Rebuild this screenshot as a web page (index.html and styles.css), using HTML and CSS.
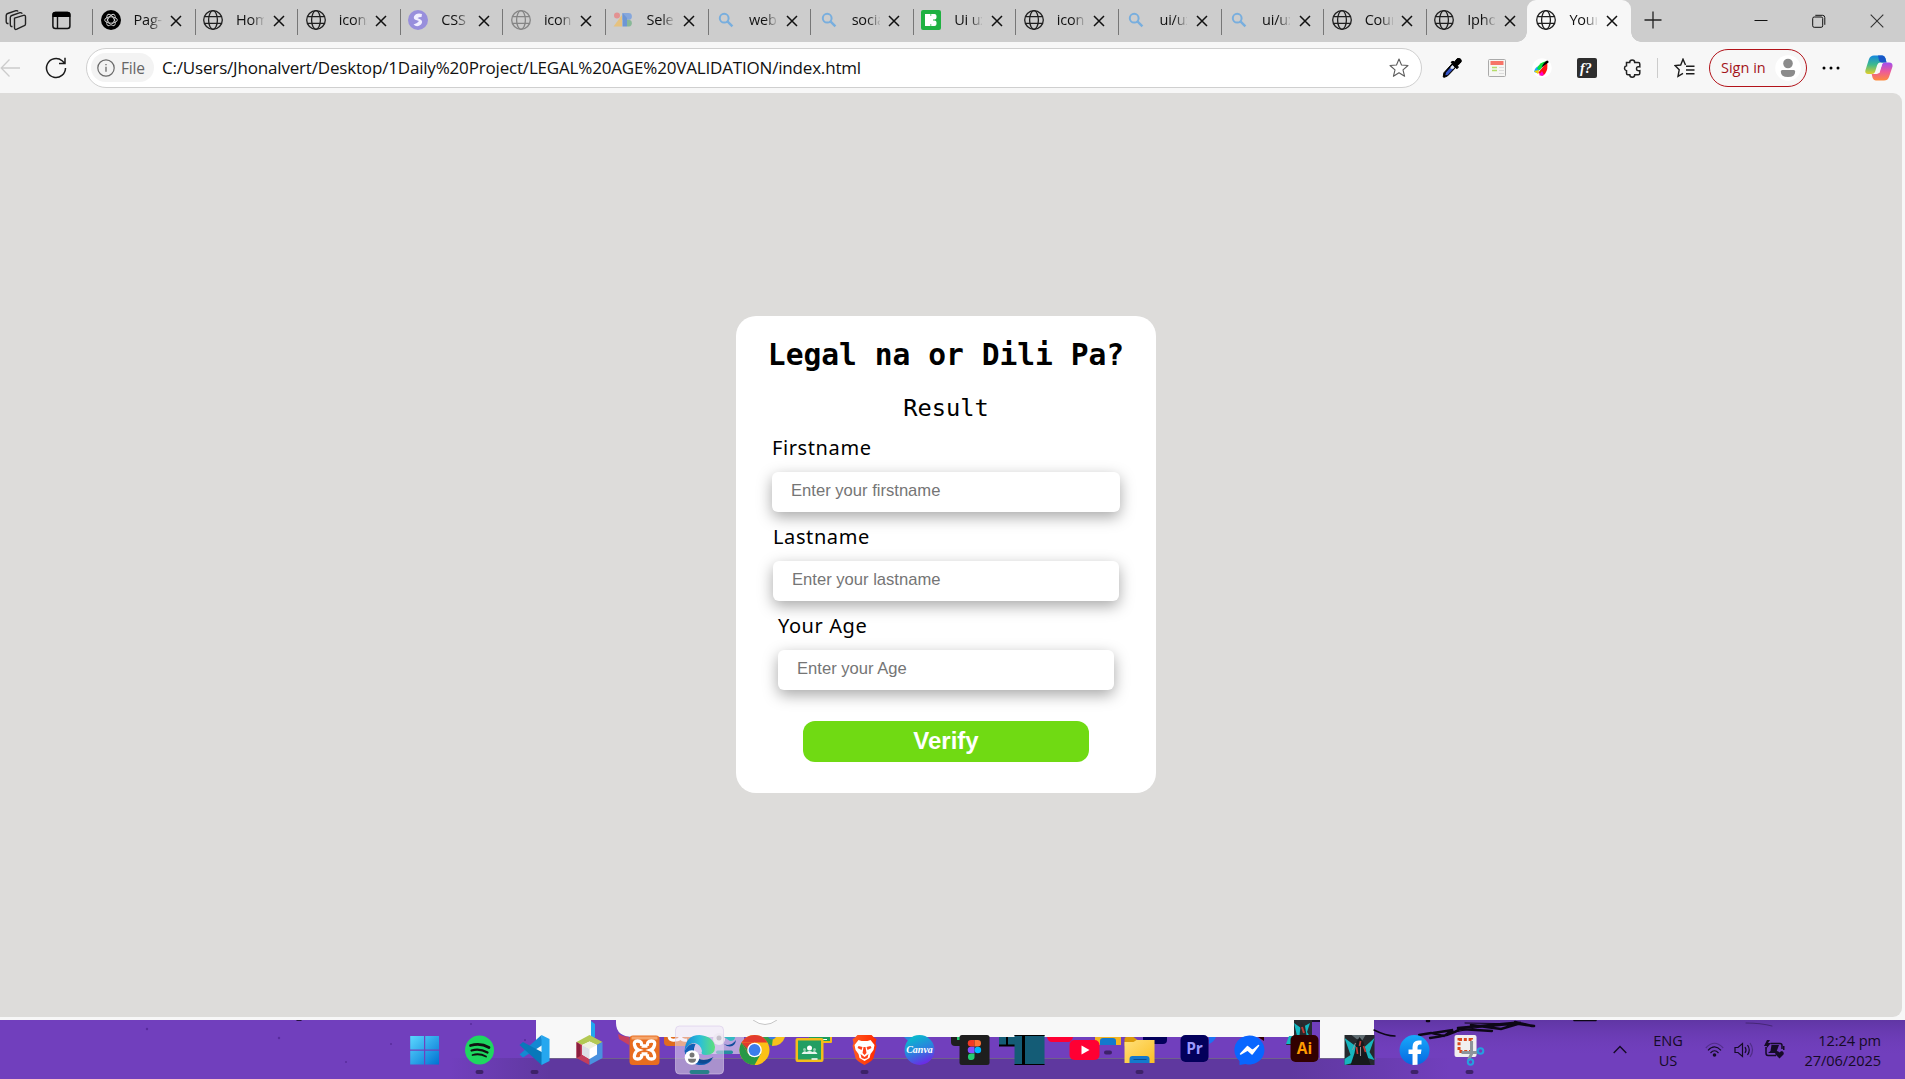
FILE: index.html
```html
<!DOCTYPE html>
<html lang="en">
<head>
<meta charset="utf-8">
<title>Your Age</title>
<link rel="stylesheet" href="styles.css">
</head>
<body>
<svg class="defs" width="0" height="0">
  <defs>
    <linearGradient id="g-win" x1="0" y1="0" x2="1" y2="1"><stop offset="0" stop-color="#5bd8ff"/><stop offset="1" stop-color="#0072d2"/></linearGradient>
    <linearGradient id="g-edge" x1="0" y1="0" x2="1" y2="0"><stop offset="0" stop-color="#1785d8"/><stop offset=".5" stop-color="#2bbfd8"/><stop offset="1" stop-color="#5fe07a"/></linearGradient>
    <linearGradient id="g-canva" x1=".3" y1="0" x2=".7" y2="1"><stop offset="0" stop-color="#06bfcb"/><stop offset=".5" stop-color="#2a82de"/><stop offset="1" stop-color="#7420e6"/></linearGradient>
    <linearGradient id="g-fold" x1="0" y1="0" x2="1" y2="1"><stop offset="0" stop-color="#ffe07a"/><stop offset="1" stop-color="#fbbf24"/></linearGradient>
    <linearGradient id="g-brave" x1="0" y1="0" x2="1" y2="0"><stop offset="0" stop-color="#ff5a1f"/><stop offset="1" stop-color="#ff2a00"/></linearGradient>
    <linearGradient id="g-fb" x1="0" y1="0" x2="0" y2="1"><stop offset="0" stop-color="#17a9fb"/><stop offset="1" stop-color="#0767e0"/></linearGradient>
    <linearGradient id="g-cop1" x1="0" y1="0" x2="0" y2="1"><stop offset="0" stop-color="#1488e0"/><stop offset=".5" stop-color="#3fbb8c"/><stop offset="1" stop-color="#e3cf2a"/></linearGradient>
    <linearGradient id="g-cop2" x1="0" y1="0" x2="0" y2="1"><stop offset="0" stop-color="#a04ff0"/><stop offset=".5" stop-color="#ec5a9a"/><stop offset="1" stop-color="#ff8a3c"/></linearGradient>
    <linearGradient id="g-band" x1="0" y1="0" x2="1" y2="0"><stop offset="0" stop-color="#5f389f" stop-opacity="0"/><stop offset=".1" stop-color="#5f389f"/><stop offset=".84" stop-color="#5f389f"/><stop offset="1" stop-color="#5f389f" stop-opacity="0"/></linearGradient>
    <linearGradient id="g-right" x1="0" y1="0" x2="0" y2="1"><stop offset="0" stop-color="#4b2b86" stop-opacity=".45"/><stop offset="1" stop-color="#6b3cb4" stop-opacity="0"/></linearGradient>
    <symbol id="globe" viewBox="0 0 20 20"><g fill="none" stroke="currentColor" stroke-width="1.3"><circle cx="10" cy="10" r="9.3"/><ellipse cx="10" cy="10" rx="4.4" ry="9.3"/><path d="M1.5 6.6h17M1.5 13.4h17"/></g></symbol>
    <symbol id="close" viewBox="0 0 12 12"><path d="M1 1l10 10M11 1L1 11" fill="none" stroke="#111" stroke-width="1.5"/></symbol>
    <symbol id="search" viewBox="0 0 20 20"><g fill="none" stroke="#78aede" stroke-width="2"><circle cx="8.2" cy="8.2" r="4.4"/><path d="M11.4 11.4l5 5" stroke-width="2.4"/></g></symbol>
  </defs>
</svg>

<header class="tabstrip">
  <div class="strip-tools">
    <svg width="22" height="22" viewBox="0 0 22 22"><g fill="none" stroke="#222" stroke-width="1.4" stroke-linejoin="round"><path d="M9.5 9.2l9-2.8q2-.5 2 1.500v7q0 1.200-1.200 1.800l-7.500 3.500q-2.300.9-2.300-1.500z"/><path d="M7.500 17.500q-2.200.3-2.200-2V8.500q0-1.500 1.500-2L15 3.700q1.800-.4 2.200 1"/><path d="M3.500 14.500q-2.300.3-2.300-2V6.500q0-1.500 1.500-2L11 1.700q1.500-.4 2 .8"/></g></svg>
    <svg width="19" height="19" viewBox="0 0 19 19"><rect x=".9" y="1.500" width="17" height="16" rx="2.500" fill="none" stroke="#111" stroke-width="1.500"/><path d="M.5 6V3.500Q.5.800 3.500.800h12q2.900 0 2.900 2.700V6z"/><path d="M5.500 6v11.500" stroke="#111" stroke-width="1.400"/></svg>
  </div>
  <nav class="tabs">
    <div class="tab"><svg class="fav" viewBox="0 0 20 20"><circle cx="10" cy="10" r="10"/><g fill="none" stroke="#ddd" stroke-width=".9"><ellipse cx="10" cy="10" rx="6.300" ry="3.200"/><ellipse cx="10" cy="10" rx="6.300" ry="3.200" transform="rotate(60 10 10)"/><ellipse cx="10" cy="10" rx="6.300" ry="3.200" transform="rotate(120 10 10)"/></g></svg><span>Pag-ibig</span><svg class="x"><use href="#close"/></svg></div>
    <div class="tab"><svg class="fav"><use href="#globe"/></svg><span>Home</span><svg class="x"><use href="#close"/></svg></div>
    <div class="tab"><svg class="fav"><use href="#globe"/></svg><span>icons</span><svg class="x"><use href="#close"/></svg></div>
    <div class="tab"><svg class="fav" viewBox="0 0 20 20"><circle cx="10" cy="10" r="10" fill="#988fdc"/><path d="M14 4q-6-1.500-8 2.500-.8 2.500 2 3.500l3 1q-2 3-5.500 3.500Q9 18 13 14.500q2.500-3-.5-5L9.500 8q1.500-1 4-1z" fill="#f1efff"/></svg><span>CSS G</span><svg class="x"><use href="#close"/></svg></div>
    <div class="tab"><svg class="fav faded"><use href="#globe"/></svg><span>icons</span><svg class="x"><use href="#close"/></svg></div>
    <div class="tab"><svg class="fav" viewBox="0 0 20 20"><circle cx="4" cy="5.500" r="3" fill="#e39292"/><path d="M.5 16.500L9 5v11.500z" fill="#e6c27f"/><path d="M9.500 3h6a3.400 3.400 0 010 6.800h-6z" fill="#86a7dc"/><path d="M14 9.800h2a3.400 3.400 0 010 6.700h-2z" fill="#88b897"/><path d="M9.500 3L14 8v8.500H9.500z" fill="#6d96d4"/></svg><span>Select</span><svg class="x"><use href="#close"/></svg></div>
    <div class="tab"><svg class="fav"><use href="#search"/></svg><span>web d</span><svg class="x"><use href="#close"/></svg></div>
    <div class="tab"><svg class="fav"><use href="#search"/></svg><span>social</span><svg class="x"><use href="#close"/></svg></div>
    <div class="tab"><svg class="fav" viewBox="0 0 20 20"><rect width="20" height="20" rx="2" fill="#1fb141"/><path d="M4 4h5.500v12H4zM10.200 4h3.300q2 0 2 2v1.500q0 2-2 2h-3.300zM10.200 10.400h3.300q2 0 2 2V14q0 2-2 2h-3.300zM9 6h3v8H9z" fill="#fff"/></svg><span>Ui ux</span><svg class="x"><use href="#close"/></svg></div>
    <div class="tab"><svg class="fav"><use href="#globe"/></svg><span>icons</span><svg class="x"><use href="#close"/></svg></div>
    <div class="tab"><svg class="fav"><use href="#search"/></svg><span>ui/ux</span><svg class="x"><use href="#close"/></svg></div>
    <div class="tab"><svg class="fav"><use href="#search"/></svg><span>ui/ux</span><svg class="x"><use href="#close"/></svg></div>
    <div class="tab"><svg class="fav"><use href="#globe"/></svg><span>Coun</span><svg class="x"><use href="#close"/></svg></div>
    <div class="tab"><svg class="fav"><use href="#globe"/></svg><span>Iphone</span><svg class="x"><use href="#close"/></svg></div>
    <div class="tab active"><svg class="fav"><use href="#globe"/></svg><span>Your A</span><svg class="x"><use href="#close"/></svg></div>
  </nav>
  <svg class="newtab" width="18" height="18" viewBox="0 0 18 18"><path d="M9 .5v17M.5 9h17" stroke="#222" stroke-width="1.300"/></svg>
  <div class="window-buttons">
    <svg width="14" height="14" viewBox="0 0 14 14"><path d="M.5 6.500h13" stroke="#111"/></svg>
    <svg width="14" height="14" viewBox="0 0 14 14"><g fill="none" stroke="#111"><rect x=".7" y="3" width="10" height="10.300" rx="1.500"/><path d="M3.300 1.300h7.200q2.300 0 2.300 2.300v7.200"/></g></svg>
    <svg width="14" height="14" viewBox="0 0 14 14"><path d="M.7.7l12.600 12.600M13.300.7L.7 13.300" stroke="#333" stroke-width="1.100"/></svg>
  </div>
</header>

<section class="toolbar">
  <svg class="back" width="21" height="20" viewBox="0 0 21 20"><path d="M20 10H1.500M9.500 1.500L1.200 10l8.300 8.500" fill="none" stroke="#ccc" stroke-width="1.300"/></svg>
  <svg class="reload" width="22" height="22" viewBox="0 0 22 22"><path d="M20.500 11a9.500 9.500 0 11-3.400-7.300L19.500 6M20 .8v5.700h-6" fill="none" stroke="#1c1c1c" stroke-width="1.500"/></svg>
  <div class="address">
    <div class="chip"><svg width="18" height="18" viewBox="0 0 18 18"><circle cx="9" cy="9" r="8.200" fill="none" stroke="#6a6a6a" stroke-width="1.200"/><path d="M9 7.800v5M9 4.900v1.400" stroke="#6a6a6a" stroke-width="1.300"/></svg><span>File</span></div>
    <span class="url">C:/Users/Jhonalvert/Desktop/1Daily%20Project/LEGAL%20AGE%20VALIDATION/index.html</span>
    <svg class="star" width="20" height="20" viewBox="0 0 20 20"><path d="M10 1l2.500 6 6.500.5-5 4.300 1.600 6.500L10 14.800l-5.600 3.500L6 11.800 1 7.500 7.500 7z" fill="none" stroke="#5c5c5c" stroke-width="1.100" stroke-linejoin="round"/></svg>
  </div>
  <div class="extensions">
    <svg width="20" height="20" viewBox="0 0 20 20"><path d="M1.200 19l.7-4.200 8.300-9.200 3.700 3.600-8.200 8.600-3.300 1.500z" stroke="#000"/><path d="M4.200 14.300l3.500-4 3.500.6-5.700 6-2.300.4z" fill="#3454c8"/><path d="M8.500 9l2-2 2.200 2.200-1.500 1.700-2.700-.2z" fill="#dfe8fb"/><path d="M9 4.200l2-1 1.500.8L15 .8q2.500-1.500 4 .8 1 2-.8 3.500L15.500 7.500l.8 1.800-1.400 1.500z" stroke="#000"/></svg>
    <svg width="20" height="20" viewBox="0 0 20 20"><rect x="1.500" y="1.500" width="17" height="17" rx="1" fill="#f6f6f4" stroke="#aaa"/><rect x="3.500" y="3" width="13" height="4" fill="#f77468"/><path d="M5 9.500h5M5 12.500h5" stroke="#b4dc68" stroke-width="1.600"/><path d="M12 9.500h5M12 12.500h5M12 15.500h5" stroke="#ddd"/></svg>
    <svg width="20" height="20" viewBox="0 0 20 20"><circle cx="10" cy="10" r="9.800" fill="#fff"/><path d="M2 14Q3 9 7 8l3 1-5 6z" fill="#16a8ff"/><path d="M5 11Q7 4 15 3L8 12z" fill="#0be03a"/><path d="M6 15l9-11q1.500 7-2 12-3 3-4 1-1-1.500-3-2z" fill="#f11"/><path d="M2 13l5-1-1 4z" fill="#f5d400"/><path d="M7 17l3-4 2 4q-3 1.500-5 0z" fill="#f0c"/><path d="M9.500 9.500q2-5 5.500-7 2 0 1.500 2-3 2-7 5z"/></svg>
    <svg width="20" height="20" viewBox="0 0 20 20"><rect width="20" height="20" rx="2" fill="#2e2e2e"/><text class="glyph" x="3" y="15" fill="#fff">f?</text></svg>
    <svg width="20" height="20" viewBox="0 0 20 20"><path d="M4.500 4.500h3.200a2.500 2.500 0 015 0h3.600q1.500 0 1.500 1.500v2.800q-3.300-.6-3.300 1.900t3.300 2v2.500q0 1.500-1.500 1.500h-3.600a2.400 2.400 0 01-4.900 0H6q-1.500 0-1.500-1.500v-2.500a2.500 2.500 0 010-4.900z" fill="none" stroke="#222" stroke-width="1.500"/></svg>
  </div>
  <i class="divider"></i>
  <svg class="favs" width="21" height="20" viewBox="0 0 21 20"><path d="M11.500 7L9 1.200 6.700 7 1 7.600l4.200 4.200-1.200 6.500 5-3M12 8.200h8.500M12 12h8.500M12 15.800h8.500" fill="none" stroke="#1c1c1c" stroke-width="1.400"/></svg>
  <div class="signin"><span>Sign in</span><svg width="26" height="26" viewBox="0 0 26 26"><circle cx="13" cy="13" r="12.800" fill="#fff"/><circle cx="13" cy="8.500" r="4.800" fill="#8b8b8b"/><path d="M5.800 16.500q0-1.500 1.500-1.500h11.400q1.500 0 1.500 1.500 0 5.500-7.200 5.500t-7.200-5.500z" fill="#8b8b8b"/></svg></div>
  <svg class="more" width="18" height="4" viewBox="0 0 18 4"><circle cx="2" cy="2" r="1.500"/><circle cx="9" cy="2" r="1.500"/><circle cx="16" cy="2" r="1.500"/></svg>
  <svg class="copilot" width="28" height="26" viewBox="0 0 28 26"><path d="M9 .5h8q2.500 0 3.500 3l1 4H15q-2 0-2.800 2.500L10 17q-.8 2-3 2H3Q-.5 19 .5 15L4 4Q5.300.5 9 .5z" fill="url(#g-cop1)"/><path d="M13 .5h4q2.500 0 3.500 3l1 4H17q-2.500 0-3-2z" fill="#1857c8"/><path d="M19 25.500h-8q-2.500 0-3.500-3l-.8-3.500h5q2 0 2.800-2.500L17 9.500q.8-2 3-2h4q4 0 3.500 4L24 22q-1.200 3.500-5 3.500z" fill="url(#g-cop2)"/><path d="M14.500 9h2.700l-2.700 9h-3z" fill="#f7f7f7"/></svg>
</section>

<main class="viewport">
  <div class="page">
    <form class="card">
      <h1>Legal na or Dili Pa?</h1>
      <p class="result">Result</p>
      <div class="field first"><label for="fn">Firstname</label><input id="fn" type="text" placeholder="Enter your firstname"></div>
      <div class="field last"><label for="ln">Lastname</label><input id="ln" type="text" placeholder="Enter your lastname"></div>
      <div class="field age"><label for="ag">Your Age</label><input id="ag" type="text" placeholder="Enter your Age"></div>
      <button type="button">Verify</button>
    </form>
  </div>
</main>

<footer class="taskbar">
  <svg class="wallpaper" width="1905" height="59" viewBox="0 0 1905 59">
    <rect width="1905" height="59" fill="#713fbd"/>
    <rect x="1374" width="531" height="35" fill="url(#g-right)"/>
    <rect x="450" y="38" width="1000" height="21" fill="url(#g-band)"/>
    <path d="M536 38.500h840" stroke="#70618c"/>
    <path d="M536 0h55v38h-55zM1320 0h54v38h-54z" fill="#f8f8f8"/>
    <path d="M591 1l4 3v13l-4 3z" fill="#22a5ee"/>
    <path d="M616 0h678v17H634q-18 0-18-14z" fill="#f8f8f8"/>
    <path d="M753 0q12 9 24 0" fill="#fff" stroke="#c6c6c6"/>
    <path d="M618 14q5 3 11 3v8l-10-6z" fill="#c9415f"/>
    <path d="M664 17h28v9h-24q-4 0-4-4z" fill="#e06b1e"/><path d="M669 17q1 4 6 3 5 0 5-3 2 4 7 3" fill="none" stroke="#fff" stroke-width="3"/>
    <path d="M692 17h52v14q0 3-3 3h-49z" fill="#b9a2dd"/><circle cx="719" cy="19" r="6" fill="#eee"/><circle cx="719" cy="18" r="2.500" fill="#999"/><path d="M722 23q8 5 14-3-1 8-9 6z" fill="#124f9c"/><path d="M724 17h11q0 4-5 4z" fill="#33b9c3"/><rect x="716" y="30.500" width="17" height="3.500" rx="1.700" fill="#278da0"/>
    <path d="M763 17h10v9q-7-2-10-9z" fill="#2f9e4b"/><path d="M773 17h12q-3 9-13 9z" fill="#f7c11c"/><path d="M768 17h8q-4 5-8 0z" fill="#3b78e7"/>
    <path d="M809 17h23v5q0 1-1 1h-22z" fill="#f5ba18"/><path d="M809 17h21v4h-21z" fill="#1b9e5c"/><path d="M820 19.500h7" stroke="#fff"/>
    <path d="M904 17h8l-3 5z" fill="#268cdd"/>
    <path d="M951 17h18v9h-14q-4 0-4-4z" fill="#1e1e1e"/><rect x="957" y="17" width="8" height="3" fill="#24cb71"/>
    <path d="M999 17h21v8.500h-21z" fill="#145c76"/><path d="M999 25.500h21M1007 17v8" stroke="#000" stroke-width="2"/>
    <path d="M1047 17h26q-1 5-5 5h-16q-4 0-5-5z" fill="#ff0033"/>
    <path d="M1095 17h26v8h-26z" fill="#f3b421"/><path d="M1100 25v-4q0-3 3-3h10q3 0 3 3v4z" fill="#1379cd"/>
    <rect x="1104" y="30.500" width="8" height="4" rx="2" fill="#3d2269"/>
    <path d="M1143 17h24v3q0 4-4 4h-16q-4 0-4-5z" fill="#03005b"/><path d="M1209 17h7q-2 5-7 7z" fill="#1d72f2"/><path d="M1258 17h6v4z" fill="#310000"/>
    <path d="M1294 0h18v25h-26l4-9h4z" fill="#282c30"/><path d="M1294 3l7 5 9-5-3 9 5 8-6-2-8 6h-12l3-8h8z" fill="#13b9c2"/><path d="M1301 2l4 4 2 12-8 2z" fill="#26282b"/><path d="M1302 7l2 6" stroke="#c23a34" stroke-width="2"/><path d="M1312 1h8" stroke="#1b0e2e" stroke-width="2"/>
    <g fill="none" stroke="#0d0716" stroke-linecap="round"><path d="M1374 10q12 6 21 6" stroke-width="1.500"/><path d="M1419 15l12-2 13 3 9-6-20 3M1430 18q20-2 30-9l32 2" stroke-width="2.300"/><path d="M1427 1h2M1458 8l55-5 21 3M1471 5l30 4 20-6-33 3M1515 2l17 4" stroke-width="2.600"/><path d="M1574 .5h22M297 0h4" stroke-width="1.500"/><path d="M1455 12l40-8M1465 3l60 1" stroke-width="1"/><path d="M1746 3q15 0 26 3" stroke-opacity=".35"/></g>
    <g fill="#582c9c"><circle cx="147" cy="9" r="1.200"/><circle cx="279" cy="18" r="1.200"/><circle cx="346" cy="42" r="1"/><circle cx="391" cy="24" r="1"/><circle cx="471" cy="4" r="1"/><circle cx="525" cy="20" r="1"/></g>
  </svg>

  <div class="apps">
    <svg viewBox="-27.500 -30 55 59"><path d="M-14.300-14H-.5V-.500h-13.800zM.7-14h13.800V-.500H.7zM-14.300.700H-.5v13.800h-13.800zM.7.700h13.800v13.800H.7z" fill="url(#g-win)"/></svg>
    <svg viewBox="-27.500 -30 55 59"><circle r="14.500" fill="#1ed760"/><g fill="none" stroke="#111" stroke-linecap="round"><path d="M-9-4.500Q1-7.500 9.500-2.500" stroke-width="2.700"/><path d="M-8 .5Q0-2 8 2.500" stroke-width="2.200"/><path d="M-7 5Q0 3 6.500 6.500" stroke-width="1.800"/></g><rect class="run" x="-4" y="20" width="8" height="4" rx="2"/></svg>
    <svg viewBox="-27.500 -30 55 59"><path d="M7-15L-15 4.500l3.500 3L8-5z" fill="#1489d2"/><path d="M-11.500-8l-3.500 3L7 15l4-3V4z" fill="#0878ba"/><path d="M7-15v30l8-4v-22z" fill="#26a7ef"/><rect class="run" x="-4" y="20" width="8" height="4" rx="2"/></svg>
    <svg viewBox="-27.500 -30 55 59"><path d="M0-15l13 7L0-1-13-8z" fill="#b3c954"/><path d="M-13-8L0-1v16L-13 8z" fill="#c33d5b"/><path d="M13-8L0-1v16L13 8z" fill="#4a91df"/><path d="M-13-8l4 3v11l-4 2z" fill="#8c1f3e"/><path d="M0-8.500L7.500-5v9.500L0 9l-7.500-4.500V-5z" fill="#fff"/><path d="M0-8.500L7.500-5 0-1-7.500-5z" fill="#eff1df"/><path d="M0-1v10l-7.500-4.500V-5z" fill="#dedfe6"/></svg>
    <svg viewBox="-27.500 -30 55 59"><rect x="-15" y="-14.500" width="30" height="29.500" rx="3.500" fill="#e86d1f"/><path d="M-13-13.500h26v3h-26z" fill="#f5a46a"/><path d="M-3-4h6M-3 4h6M-3-4q1-5-4-5-4 0-3 4Q-9-1-6 0-9 1-10 5q-1 4 3 4 5 0 4-5M3-4q-1-5 4-5 4 0 3 4Q9-1 6 0 9 1 10 5q1 4-3 4-5 0-4-5" fill="none" stroke="#fff" stroke-width="3.300"/></svg>
    <svg viewBox="-27.500 -30 55 59"><rect x="-24" y="-24" width="48" height="48" rx="4" fill="#ede4f7" fill-opacity=".52" stroke="#d8caea" stroke-opacity=".6"/><path d="M-15 1Q-14-15 0-15 14-14 15.500-3q0 8-9 8-6 0-4-4Q1-6-5-7-11-7-15 1z" fill="url(#g-edge)"/><path d="M-15 1Q-10-8-4-6-9 5 0 10q6 3 13-1Q7 17-3 14.500-14 11-15 1z" fill="#1160b7"/><path d="M-4-6q-4 7 0 12Q2 13 12 8L14 7Q7 17-3 12-10 3-4-6z" fill="#0c4a91"/><circle cx="-7.500" cy="7.500" r="7.300" fill="#fff"/><circle cx="-7.500" cy="5" r="2.500" fill="#777"/><path d="M-11.500 8.800h8q0 4-4 4t-4-4z" fill="#777"/><rect x="-10" y="20" width="20" height="4" rx="2" fill="#278089"/></svg>
    <svg viewBox="-27.500 -30 55 59"><circle r="15" fill="#fbc116"/><path d="M-13-7.500A15 15 0 0113-7.500H0z" fill="#e33b2e"/><path d="M-13-7.500A15 15 0 000 15L6.500 3.500-6.500 3.500z" fill="#279847"/><path d="M-13-7.500L-6.500 3.500 0-7.500z" fill="#e33b2e"/><path d="M-13-7.500L-6 4 0 7z" fill="#279847"/><circle r="7.300" fill="#fff"/><circle r="5.900" fill="#3b7ded"/></svg>
    <svg viewBox="-27.500 -30 55 59"><rect x="-14" y="-12" width="28" height="24" rx="2" fill="#f4bd1a"/><rect x="-11.500" y="-9.500" width="23" height="19" fill="#219e62"/><circle cy="-2" r="2.500" fill="#fff"/><circle cx="-5" cy="-.5" r="1.500" fill="#8fd0ad"/><circle cx="5" cy="-.5" r="1.500" fill="#8fd0ad"/><path d="M-8 4q2-4 5-2 3-2 6 0 3-2 5 2z" fill="#e7f5ed"/><path d="M2 9h6" stroke="#fff" stroke-width="1.500"/></svg>
    <svg viewBox="-27.500 -30 55 59"><path d="M-7-15H7l3 3 2 1-1 4 1 3-3 12Q8 11 0 15-8 11-9 8l-3-12 1-3-1-4 2-1z" fill="url(#g-brave)"/><path d="M-6-10l3 1h6l3-1 4 5-1 5-3 4L5 8 0 11-5 8l-1-4-3-4-1-5z" fill="#fff"/><path d="M-6-4l4 1-1 3-4-2zM6-4L2-3l1 3 4-2zM-1-3h2L2 3 0 5-2 3zM-4 4L0 7l4-3-1 4-3 1-3-1z" fill="#ff421a"/><rect class="run" x="-4" y="20" width="8" height="4" rx="2"/></svg>
    <svg viewBox="-27.500 -30 55 59"><circle r="15" fill="url(#g-canva)"/><text class="canva" y="3" text-anchor="middle" fill="#fff">Canva</text></svg>
    <svg viewBox="-27.500 -30 55 59"><rect x="-15" y="-15" width="30" height="30" rx="2.500" fill="#1e1e1e"/><path d="M0-10h-3.500a3.200 3.200 0 000 6.500H0z" fill="#f33a25"/><path d="M0-10h3.200a3.200 3.200 0 010 6.500H0z" fill="#ff7237"/><path d="M0-3.300h-3.500a3.200 3.200 0 000 6.600H0z" fill="#874fff"/><circle cx="3.300" r="3.300" fill="#00b6ff"/><path d="M0 3.500v3a3.300 3.300 0 11-3.300-3z" fill="#24cb71"/></svg>
    <svg viewBox="-27.500 -30 55 59"><path d="M-15-15h30v30h-30z" fill="#145c76"/><path d="M-15-14.500h30M-15 14.500h30" stroke="#000"/><path d="M-6-15v30" stroke="#000" stroke-width="3"/></svg>
    <svg viewBox="-27.500 -30 55 59"><rect x="-15" y="-10" width="30" height="20" rx="5" fill="#ff0033"/><path d="M-3-4.500L5 0l-8 4.500z" fill="#fff"/></svg>
    <svg viewBox="-27.500 -30 55 59"><path d="M-15-11q0-2 2-2h7l4 3v6h-13z" fill="#dc9a08"/><path d="M-15-8h9l3-2h18v23h-30z" fill="url(#g-fold)"/><path d="M-10 13V9q0-3 3-3H7q3 0 3 3v4z" fill="#1379cd"/><path d="M-6 9.500H7" stroke="#0a4d91"/><rect class="run" x="-4" y="20" width="8" height="4" rx="2"/></svg>
    <svg viewBox="-27.500 -30 55 59"><rect x="-14" y="-15" width="28" height="27" rx="5" fill="#03005b"/><text class="adobe" y="4" text-anchor="middle" fill="#9b98ff">Pr</text></svg>
    <svg viewBox="-27.500 -30 55 59"><path d="M0-14.500A15 14.500 0 1 1-4 14l-6 1v-4A15 14.500 0 010-14.500z" fill="#0866ff"/><path d="M-9 4l7-7.500L3 .500l6-5L2.500 4-2 0z" fill="#fff" stroke="#fff" stroke-width="1.500" stroke-linejoin="round"/></svg>
    <svg viewBox="-27.500 -30 55 59"><rect x="-14" y="-15" width="28" height="27" rx="5" fill="#310000"/><text class="adobe" y="4" text-anchor="middle" fill="#ff9a00">Ai</text></svg>
    <svg viewBox="-27.500 -30 55 59"><path d="M-15-15h30v30h-30z" fill="#25292d"/><path d="M-15-12L-4-4 1-14 5-3l10-9-5 14 5 8-7-2-6 7-9-2-8 2v-6l6-4z" fill="#17b5be"/><path d="M-8-15h14l-3 5-6-1z" fill="#606d72"/><path d="M-3-8l3-5 4 5 2 8 5 15H-9l4-12z" fill="#17191c"/><path d="M1-9L0-4M-3-3l1 7M4-4l2 6" stroke="#c23a34" stroke-width="1.700"/><path d="M-4-7l-3 7M1-3v9" stroke="#91999a"/></svg>
    <svg viewBox="-27.500 -30 55 59"><circle r="15" fill="url(#g-fb)"/><path d="M-2 15V4h-4v-4.500h4V-3q0-6.500 6-6.500h3v4H5Q3-5.500 3-3v2.500h4L6.300 4H3v10.700z" fill="#fff"/><rect class="run" x="-4" y="20" width="8" height="4" rx="2"/></svg>
    <svg viewBox="-27.500 -30 55 59"><rect x="-15" y="-15" width="22" height="22" rx="2" fill="#f1efef"/><rect x="-10.500" y="-10.500" width="12.500" height="12" fill="none" stroke="#d9481c" stroke-width="3" stroke-dasharray="3 1.800"/><path d="M2-9V4l-3 6M-8 2.500H8" fill="none" stroke="#8c949b" stroke-width="3"/><circle cx="11" cy="1" r="2.800" fill="none" stroke="#25a0df" stroke-width="2"/><circle cx="1" cy="12" r="2.700" fill="none" stroke="#25a0df" stroke-width="2"/><rect class="run" x="-4" y="20" width="8" height="4" rx="2"/></svg>
  </div>

  <div class="tray">
    <svg width="14" height="9" viewBox="0 0 14 9"><path d="M.7 8L7 1.500 13.300 8" fill="none" stroke="#150b26" stroke-width="1.400"/></svg>
    <div class="lang">ENG<br>US</div>
    <div class="status">
      <svg width="19" height="16" viewBox="0 0 19 16"><g fill="none" stroke="#150b26" stroke-width="1.200"><path d="M.8 6Q9.500-3.500 18.200 6" stroke-opacity=".3"/><path d="M3 8.300q6.500-7 13 0M5.500 11q4-4.500 8 0"/></g><circle cx="9.500" cy="13" r="1.800" fill="#150b26"/></svg>
      <svg width="20" height="16" viewBox="0 0 20 16"><g fill="none" stroke="#150b26" stroke-width="1.200"><path d="M1 5.500h3L8.500 1.500v13L4 10.500H1zM11 5q2 3 0 6M13.500 3q3.500 5 0 10"/><path d="M16 1q5 7 0 14" stroke-opacity=".35"/></g></svg>
      <svg width="21" height="19" viewBox="0 0 21 19"><path d="M6.500 3.500H16q2 0 2 2V9M2 7v6q0 2.500 2 2.500h8" fill="none" stroke="#150b26" stroke-width="1.500"/><path d="M7.500 5H15L12 13H4l2.500-2zM3 0L0 6h3L2 9l5-6H4L6 0zM15.500 18.500l-4-4q-1-2.500 1.500-3.500 1.500 0 2.500 1.500 1-1.500 2.500-1.500 2.500 1 1.500 3.500zM19 6h1.500v4H19z" fill="#150b26"/></svg>
    </div>
    <div class="clock">12:24 pm<br>27/06/2025</div>
  </div>
</footer>
</body>
</html>
```
FILE: styles.css
```css
* { box-sizing: border-box; }
body {
  margin: 0;
  width: 1905px;
  height: 1079px;
  overflow: hidden;
  display: flex;
  flex-direction: column;
  font-family: "Open Sans", sans-serif;
  background: #f7f7f7;
}
svg { flex: none; display: block; }
.defs { position: absolute; }

/* tab strip */
.tabstrip {
  height: 42px;
  flex: none;
  display: flex;
  align-items: center;
  background: #cdcdcd;
}
.strip-tools {
  width: 91px;
  display: flex;
  gap: 25px;
  padding-left: 5px;
  padding-bottom: 2px;
  align-items: center;
}
.tabs { display: flex; align-self: stretch; }
.tab {
  width: 102.6px;
  height: 42px;
  display: flex;
  align-items: center;
  padding: 0 0 2px 9.500px;
  position: relative;
  color: #1f1f1f;
}
.tab::before {
  content: "";
  position: absolute;
  left: 1px;
  top: 9px;
  width: 1px;
  height: 26px;
  background: #777;
}
.tab .fav { width: 20px; height: 20px; }
.tab .faded { color: #858585; }
.tab span {
  width: 28px;
  margin-left: 13px;
  margin-top: -1px;
  overflow: hidden;
  white-space: nowrap;
  font-size: 14.500px;
  letter-spacing: -.2px;
  color: #111;
  -webkit-mask-image: linear-gradient(90deg, #000 55%, transparent 105%);
  mask-image: linear-gradient(90deg, #000 55%, transparent 105%);
}
.tab .x { width: 12px; height: 12px; margin-left: 8.500px; margin-top: 1px; }
.tab.active {
  width: 104px;
  margin-left: -.4px;
  background: #f7f7f7;
  border-radius: 9px 9px 0 0;
}
.tab.active::before,
.tab.active::after {
  content: "";
  position: absolute;
  top: auto;
  bottom: 0;
  width: 10px;
  height: 10px;
}
.tab.active::before { left: -10px; background: radial-gradient(circle at 0 0, #cdcdcd 9.500px, #f7f7f7 10px); }
.tab.active::after { right: -10px; background: radial-gradient(circle at 100% 0, #cdcdcd 9.500px, #f7f7f7 10px); }
.newtab { margin: 0 0 3px 13px; }
.window-buttons { margin-left: auto; display: flex; gap: 44px; padding-right: 21px; }

/* toolbar */
.toolbar {
  height: 50px;
  flex: none;
  display: flex;
  align-items: center;
  padding-top: 1px;
  background: #f7f7f7;
}
.reload { margin-left: 24px; }
.address {
  width: 1336px;
  height: 40px;
  margin-left: 19px;
  display: flex;
  align-items: center;
  border: 1px solid #cfcfcf;
  border-radius: 20px;
  background: #fff;
}
.chip {
  width: 63px;
  height: 29px;
  margin-left: 4px;
  padding-left: 6px;
  display: flex;
  align-items: center;
  gap: 6px;
  border-radius: 15px;
  background: #f3f3f3;
  color: #666;
  font-size: 15.500px;
  letter-spacing: -.2px;
}
.url { margin-left: 8px; font-size: 17px; color: #111; letter-spacing: -.18px; white-space: nowrap; }
.star { margin-left: auto; margin-right: 12px; }
.extensions { display: flex; gap: 25px; margin-left: 20px; }
.glyph { font: italic bold 14px "Liberation Serif", serif; }
.divider { width: 1px; height: 20px; margin-left: 15px; background: #ccc; }
.favs { margin-left: 16px; }
.signin {
  width: 98px;
  height: 38px;
  margin-left: 14px;
  padding: 0 5px 0 11px;
  display: flex;
  align-items: center;
  justify-content: space-between;
  border: 1px solid #b2131a;
  border-radius: 19px;
  color: #a3141a;
  font-size: 14.500px;
}
.more { margin-left: 15px; }
.copilot { margin-left: 25px; }

/* page */
.viewport { height: 928px; flex: none; padding: 1px 3px 3px 0; }
.page {
  height: 924px;
  padding: 223px 10px 0 0;
  display: flex;
  justify-content: center;
  align-items: flex-start;
  background: #dddcda;
  border-radius: 0 9px 9px 0;
}
.card {
  width: 420px;
  height: 477px;
  padding-top: 20px;
  display: flex;
  flex-direction: column;
  align-items: center;
  border-radius: 20px;
  background: #fff;
  color: #000;
}
.card h1 {
  margin: 0;
  height: 38px;
  font: bold 29.600px/38px "DejaVu Sans Mono", monospace;
  white-space: nowrap;
}
.result {
  margin: 18px 0 0;
  font: 23.700px/32px "DejaVu Sans Mono", monospace;
}
.field { display: flex; flex-direction: column; height: 89px; }
.result + .field { margin-top: 10px; }
.field label {
  height: 28px;
  margin-bottom: 10px;
  font: 20px/28px "Noto Sans", sans-serif;
  letter-spacing: .6px;
}
.field input {
  height: 40px;
  padding: 0 19px 2px;
  border: 0;
  border-radius: 6px;
  background: #fff;
  box-shadow: 0 5px 15px rgba(0, 0, 0, .35);
  font: 16.600px "Liberation Sans", sans-serif;
}
.field input::placeholder { color: #757575; opacity: 1; }
.first input { width: 348px; }
.last input { width: 346px; }
.age input { width: 336px; }
.card button {
  width: 286px;
  height: 41px;
  margin-top: 20px;
  padding: 0 0 2px;
  border: 0;
  border-radius: 12px;
  background: #70da13;
  color: #fff;
  font: bold 24px "Liberation Sans", sans-serif;
}

/* taskbar */
.taskbar {
  height: 59px;
  flex: none;
  position: relative;
  display: flex;
  justify-content: space-between;
  color: #150b26;
}
.wallpaper { position: absolute; inset: 0; }
.apps { position: relative; display: flex; margin-left: 396.500px; }
.apps svg { width: 55.050px; height: 59px; }
.run { fill: #3d2269; }
.canva { font: italic bold 10px "Liberation Serif", serif; }
.adobe { font: bold 15.500px "Open Sans", sans-serif; }
.tray {
  position: relative;
  display: flex;
  align-items: center;
  padding-right: 24px;
  font-size: 14.600px;
  line-height: 20px;
  letter-spacing: -.1px;
}
.lang { width: 30px; margin-left: 26px; text-align: center; }
.status { display: flex; align-items: center; gap: 10px; margin-left: 22px; }
.clock { width: 78px; margin-left: 18px; text-align: right; white-space: nowrap; }
```
